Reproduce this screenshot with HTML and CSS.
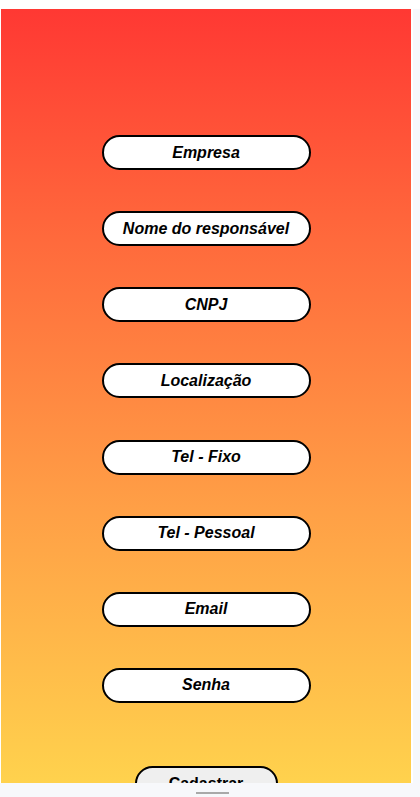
FILE: index.html
```html
<!DOCTYPE html>
<html lang="pt">
<head>
<meta charset="utf-8">
<title>Cadastro</title>
<link rel="stylesheet" href="styles.css">
</head>
<body>
<div class="screen">
  <main class="content">
    <form class="form">
      <input class="field" type="text" placeholder="Empresa">
      <input class="field" type="text" placeholder="Nome do responsável">
      <input class="field" type="text" placeholder="CNPJ">
      <input class="field" type="text" placeholder="Localização">
      <input class="field" type="text" placeholder="Tel - Fixo">
      <input class="field" type="text" placeholder="Tel - Pessoal">
      <input class="field" type="text" placeholder="Email">
      <input class="field" type="password" placeholder="Senha">
      <button class="submit" type="button">Cadastrar</button>
    </form>
  </main>
  <div class="track"></div>
</div>
<div class="bottombar"><span class="handle"></span></div>
</body>
</html>
```
FILE: styles.css
```css
html, body {
  margin: 0;
  padding: 0;
  background: #ffffff;
  font-family: "Liberation Sans", Arial, sans-serif;
  height: 797px;
  overflow: hidden;
}
.screen {
  display: flex;
  padding: 9px 0 0 1px;
  height: 774px;
}
.content {
  width: 410px;
  height: 774px;
  overflow: hidden;
  background: linear-gradient(to bottom, #ff3833 0%, #ff6a3c 30%, #ffa046 65%, #ffd24d 100%);
}
.track {
  margin-left: 2px;
  width: 7px;
  background: #f6f8fc;
}
.form {
  display: flex;
  flex-direction: column;
  align-items: center;
  gap: 41.15px;
  padding-top: 126px;
  margin: 0;
}
.field {
  box-sizing: border-box;
  width: 209px;
  height: 35px;
  margin: 0;
  padding: 0 6px;
  border: 2px solid #000;
  border-radius: 17.5px;
  background: #fff;
  font-family: "Liberation Sans", Arial, sans-serif;
  font-size: 16px;
  font-weight: bold;
  font-style: italic;
  text-align: center;
  color: #000;
  outline: none;
}
.field::placeholder {
  color: #000;
  opacity: 1;
}
.submit {
  box-sizing: border-box;
  margin-top: 22px;
  width: 143px;
  height: 35px;
  border: 2px solid #000;
  border-radius: 17.5px;
  background: #efefef;
  font-family: "Liberation Sans", Arial, sans-serif;
  font-size: 16px;
  font-weight: bold;
  color: #000;
  padding: 0;
}
.bottombar {
  height: 14px;
  background: #f7f8fb;
  display: flex;
  justify-content: center;
  padding-top: 9px;
  box-sizing: border-box;
}
.handle {
  display: block;
  width: 33px;
  height: 2px;
  background: #a9a9a9;
  margin-left: 4px;
}
```
